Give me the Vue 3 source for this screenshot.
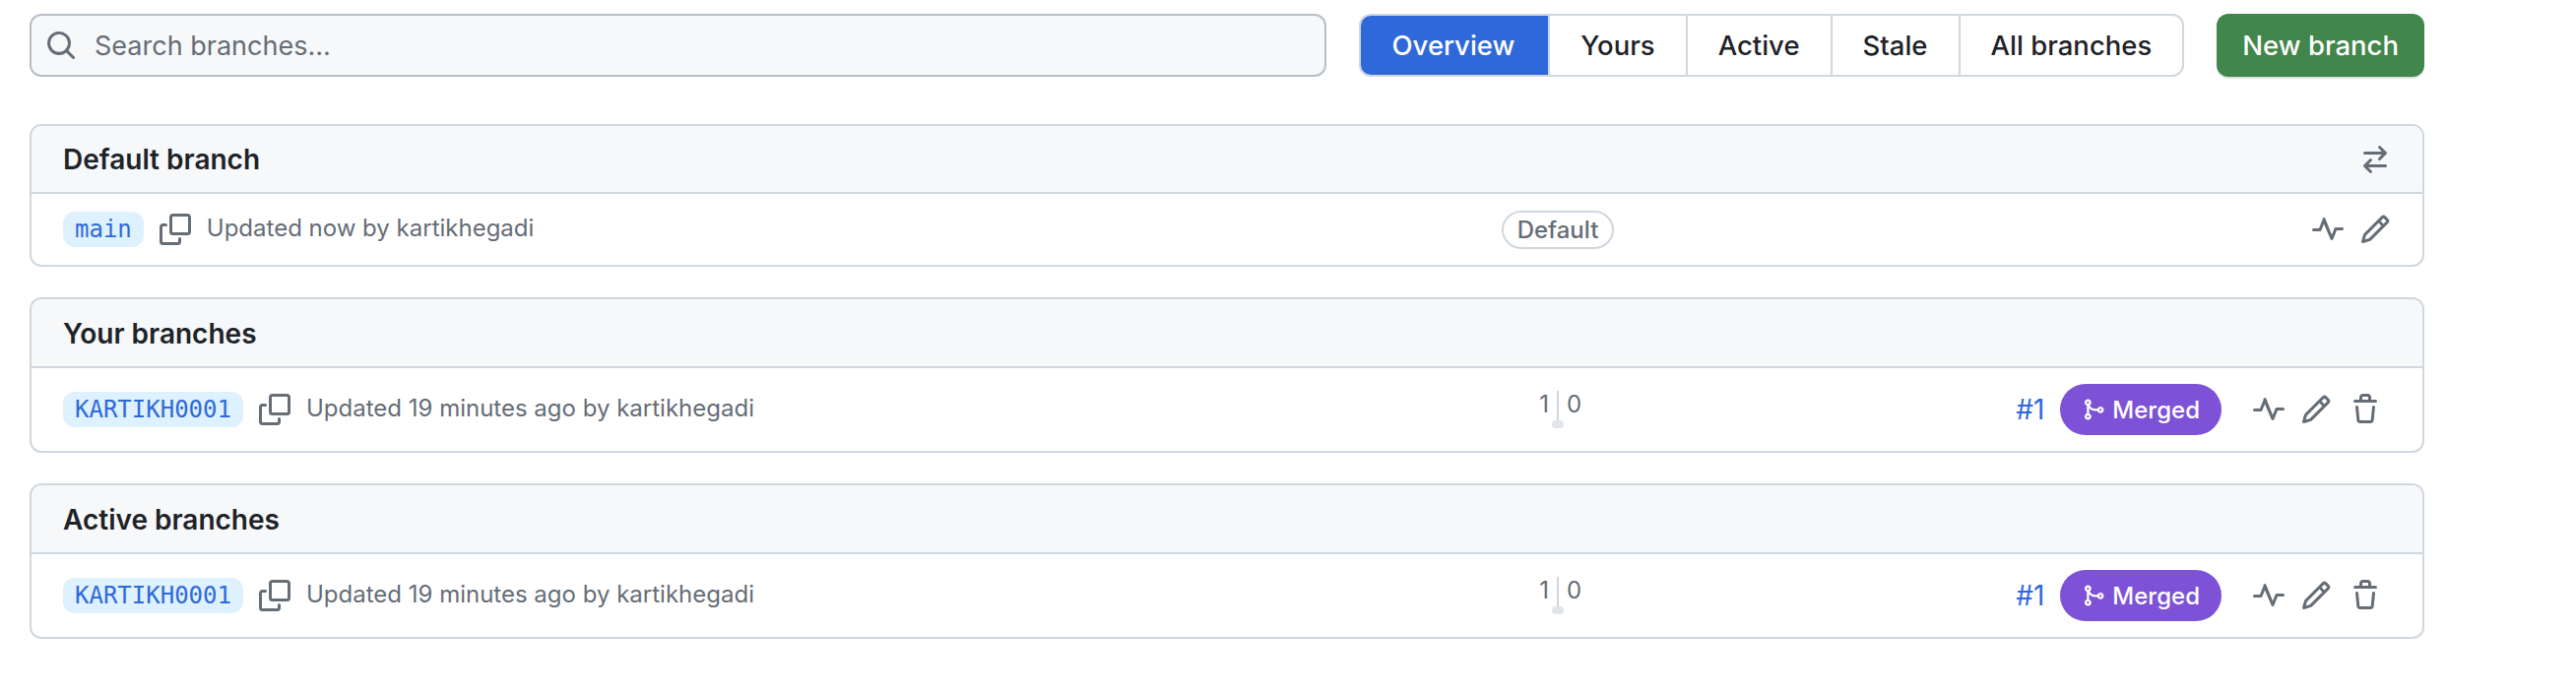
<script setup>
const paths = {
  search: 'M10.68 11.74a6 6 0 0 1-7.922-8.982 6 6 0 0 1 8.982 7.922l3.04 3.04a.749.749 0 0 1-.326 1.275.749.749 0 0 1-.734-.215ZM11.5 7a4.499 4.499 0 1 0-8.997 0A4.499 4.499 0 0 0 11.5 7Z',
  copy: 'M0 6.75C0 5.784.784 5 1.75 5h1.5a.75.75 0 0 1 0 1.5h-1.5a.25.25 0 0 0-.25.25v7.5c0 .138.112.25.25.25h7.5a.25.25 0 0 0 .25-.25v-1.5a.75.75 0 0 1 1.5 0v1.5A1.75 1.75 0 0 1 9.25 16h-7.5A1.75 1.75 0 0 1 0 14.25ZM5 1.75C5 .784 5.784 0 6.75 0h7.5C15.216 0 16 .784 16 1.75v7.5A1.75 1.75 0 0 1 14.25 11h-7.5A1.75 1.75 0 0 1 5 9.25Zm1.75-.25a.25.25 0 0 0-.25.25v7.5c0 .138.112.25.25.25h7.5a.25.25 0 0 0 .25-.25v-7.5a.25.25 0 0 0-.25-.25Z',
  swap: 'M5.22 14.78a.75.75 0 0 0 1.06-1.06L4.56 12h8.69a.75.75 0 0 0 0-1.5H4.56l1.72-1.72a.75.75 0 0 0-1.06-1.06l-3 3a.75.75 0 0 0 0 1.06l3 3Zm5.56-6.5a.75.75 0 1 1-1.06-1.06l1.72-1.72H2.75a.75.75 0 0 1 0-1.5h8.69L9.72 2.28a.75.75 0 0 1 1.06-1.06l3 3a.75.75 0 0 1 0 1.06l-3 3Z',
  pulse: 'M6 2c.306 0 .582.187.696.471L10 10.731l1.304-3.26A.751.751 0 0 1 12 7h3.25a.75.75 0 0 1 0 1.5h-2.742l-1.812 4.528a.751.751 0 0 1-1.392 0L6 5.269 4.696 8.53A.75.75 0 0 1 4 9H.75a.75.75 0 0 1 0-1.5h2.742l1.812-4.529A.751.751 0 0 1 6 2Z',
  pencil: 'M11.013 1.427a1.75 1.75 0 0 1 2.474 0l1.086 1.086a1.75 1.75 0 0 1 0 2.474l-8.61 8.61c-.21.21-.47.364-.756.445l-3.251.93a.75.75 0 0 1-.927-.928l.929-3.25c.081-.286.235-.547.445-.758l8.61-8.61Zm.176 4.823L9.75 4.81l-6.286 6.287a.253.253 0 0 0-.064.108l-.558 1.953 1.953-.558a.253.253 0 0 0 .108-.064Zm1.238-3.763a.25.25 0 0 0-.354 0L10.811 3.75l1.439 1.44 1.263-1.263a.25.25 0 0 0 0-.354Z',
  trash: 'M11 1.75V3h2.25a.75.75 0 0 1 0 1.5H2.75a.75.75 0 0 1 0-1.5H5V1.75C5 .784 5.784 0 6.75 0h2.5C10.216 0 11 .784 11 1.75ZM4.496 6.675l.66 6.6a.25.25 0 0 0 .249.225h5.19a.25.25 0 0 0 .249-.225l.66-6.6a.75.75 0 0 1 1.492.149l-.66 6.6A1.748 1.748 0 0 1 10.595 15h-5.19a1.75 1.75 0 0 1-1.741-1.575l-.66-6.6a.75.75 0 1 1 1.492-.15ZM6.5 1.75V3h3V1.75a.25.25 0 0 0-.25-.25h-2.5a.25.25 0 0 0-.25.25Z',
  merge: 'M5.45 5.154A4.25 4.25 0 0 0 9.25 7.5h1.378a2.251 2.251 0 1 1 0 1.5H9.25A5.734 5.734 0 0 1 5 7.123v3.505a2.25 2.25 0 1 1-1.5 0V5.372a2.25 2.25 0 1 1 1.95-.218ZM4.25 13.5a.75.75 0 1 0 0-1.5.75.75 0 0 0 0 1.5Zm8.5-4.5a.75.75 0 1 0 0-1.5.75.75 0 0 0 0 1.5ZM5 3.25a.75.75 0 1 0 0 .005V3.25Z'
}
const tabs = ['Overview', 'Yours', 'Active', 'Stale', 'All branches']
const sections = [
  { title: 'Your branches' },
  { title: 'Active branches' }
]
</script>

<template>
  <div class="page">
    <div class="top">
      <div class="search">
        <svg class="ic" viewBox="0 0 16 16" width="32" height="32"><path :d="paths.search" /></svg>
        <span>Search branches...</span>
      </div>
      <div class="tabs">
        <div v-for="(t, i) in tabs" :key="t" class="tab" :class="{ on: i === 0 }">{{ t }}</div>
      </div>
      <div class="new">New branch</div>
    </div>

    <section class="box first">
      <header class="head">
        <span>Default branch</span>
        <svg class="ic" viewBox="0 0 16 16" width="32" height="32"><path :d="paths.swap" /></svg>
      </header>
      <div class="row slim">
        <div class="left">
          <code class="ref">main</code>
          <svg class="ic" viewBox="0 0 16 16" width="32" height="32"><path :d="paths.copy" /></svg>
          <span class="meta">Updated now by kartikhegadi</span>
        </div>
        <div class="mid"><span class="default">Default</span></div>
        <div class="right">
          <svg class="ic" viewBox="0 0 16 16" width="32" height="32"><path :d="paths.pulse" /></svg>
          <svg class="ic" viewBox="0 0 16 16" width="32" height="32"><path :d="paths.pencil" /></svg>
        </div>
      </div>
    </section>

    <section v-for="s in sections" :key="s.title" class="box">
      <header class="head"><span>{{ s.title }}</span></header>
      <div class="row">
        <div class="left">
          <code class="ref">KARTIKH0001</code>
          <svg class="ic" viewBox="0 0 16 16" width="32" height="32"><path :d="paths.copy" /></svg>
          <span class="meta">Updated 19 minutes ago by kartikhegadi</span>
        </div>
        <div class="mid">
          <div class="counts">
            <span class="n l">1</span><span class="bar"><i></i></span><span class="n">0</span>
          </div>
        </div>
        <div class="right wide">
          <span class="pr">#1</span>
          <span class="merged">
            <svg viewBox="0 0 16 16" width="24" height="24"><path :d="paths.merge" /></svg>
            <span>Merged</span>
          </span>
          <svg class="ic gap" viewBox="0 0 16 16" width="32" height="32"><path :d="paths.pulse" /></svg>
          <svg class="ic" viewBox="0 0 16 16" width="32" height="32"><path :d="paths.pencil" /></svg>
          <svg class="ic bin" viewBox="0 0 16 16" width="32" height="32"><path :d="paths.trash" /></svg>
        </div>
      </div>
    </section>
  </div>
</template>

<style scoped>
.page {
  width: 2432px;
  height: 704px;
  margin-left: 30px;
  padding-top: 14px;
  box-sizing: border-box;
  font-family: Inter, "Liberation Sans", sans-serif;
  color: #1f2328;
  overflow: hidden;
}
.top {
  display: flex;
  align-items: stretch;
  height: 64px;
  white-space: nowrap;
}
.search {
  flex: 1;
  box-sizing: border-box;
  display: flex;
  align-items: center;
  gap: 18px;
  padding-left: 14px;
  background: #f6f8fa;
  border: 2px solid #b8bec6;
  border-radius: 12px;
  font-size: 27px;
  color: #656d76;
}
.ic {
  fill: #656d76;
  flex: none;
}
.tabs {
  display: flex;
  flex: none;
  margin-left: 33px;
  border: 2px solid #d0d7de;
  border-radius: 12px;
  overflow: hidden;
  box-sizing: border-box;
}
.tab {
  display: flex;
  align-items: center;
  padding: 0 31px;
  font-size: 27.5px;
  font-weight: 500;
  border-left: 2px solid #d0d7de;
}
.tab.on {
  background: #2f69d9;
  color: #fff;
  padding: 0 34px;
  border-left: 0;
  margin: -2px 0 -2px -2px;
}
.new {
  display: flex;
  flex: none;
  align-items: center;
  margin-left: 33px;
  padding: 0 26px;
  background: #41864a;
  border-radius: 12px;
  color: #fff;
  font-size: 27.5px;
  font-weight: 500;
  box-shadow: 0 2px 0 #dfe3e7;
}
.box {
  border: 2px solid #d0d7de;
  border-radius: 12px;
  margin-top: 31px;
  overflow: hidden;
}
.box.first {
  margin-top: 48px;
}
.head {
  display: flex;
  align-items: center;
  justify-content: space-between;
  height: 66px;
  padding: 2px 32px 0;
  background: #f6f8fa;
  border-bottom: 2px solid #d0d7de;
  font-size: 28px;
  font-weight: 600;
}
.first .head {
  height: 67px;
  padding-top: 0;
}
.row {
  display: grid;
  grid-template-columns: 1458px 120px 1fr;
  align-items: center;
  height: 84px;
  padding-left: 32px;
}
.row.slim {
  height: 72px;
}
.left {
  display: flex;
  align-items: center;
  gap: 16px;
}
.ref {
  font-family: "DejaVu Sans Mono", "Liberation Mono", monospace;
  font-size: 24px;
  color: #2f69d9;
  background: #def1ff;
  border-radius: 12px;
  padding: 0 12px;
  line-height: 36px;
}
.meta {
  font-size: 24px;
  color: #656d76;
  position: relative;
  top: -2px;
}
.mid {
  display: flex;
  justify-content: center;
}
.default {
  font-size: 24px;
  font-weight: 500;
  color: #656d76;
  border: 2px solid #d0d7de;
  border-radius: 999px;
  padding: 0 14px;
  line-height: 35px;
}
.counts {
  display: grid;
  grid-template-columns: 1fr 2px 1fr;
  gap: 8px;
  width: 60px;
  height: 38px;
}
.n {
  font-size: 24px;
  color: #656d76;
  line-height: 28px;
}
.n.l {
  text-align: right;
}
.bar {
  position: relative;
  height: 38px;
  background: #d0d7de;
}
.bar i {
  position: absolute;
  left: -5px;
  bottom: 0;
  width: 12px;
  height: 8px;
  border-radius: 4px;
  background: #e1e5e9;
}
.right {
  display: flex;
  justify-content: flex-end;
  align-items: center;
  gap: 16px;
  padding-right: 32px;
}
.right.wide {
  padding-right: 42px;
}
.pr {
  font-size: 28px;
  color: #2f69d9;
}
.merged {
  display: flex;
  align-items: center;
  gap: 7px;
  height: 52px;
  padding: 0 22px;
  background: #7d52d6;
  border-radius: 26px;
  color: #fff;
  font-size: 24px;
  font-weight: 500;
}
.merged svg {
  fill: #fff;
}
.gap {
  margin-left: 16px;
}
.bin {
  margin-left: 2px;
}
</style>
